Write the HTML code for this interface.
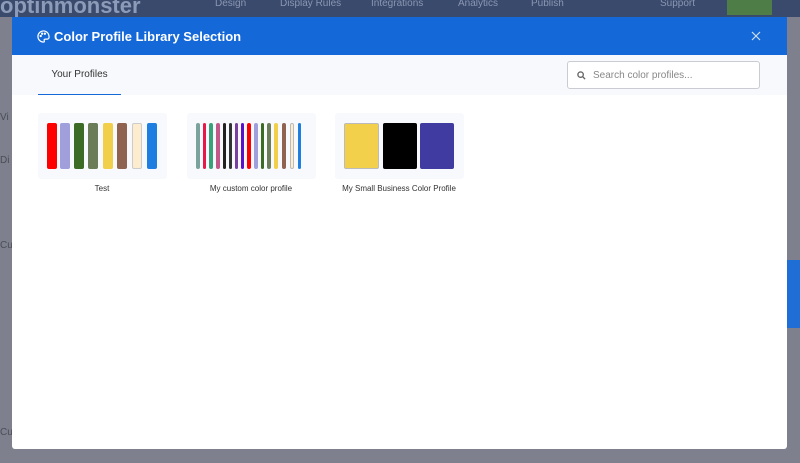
<!DOCTYPE html>
<html><head><style>
*{margin:0;padding:0;box-sizing:border-box}
body{width:800px;height:463px;overflow:hidden;background:#7e818d;font-family:"Liberation Sans",sans-serif;position:relative}
.top{position:absolute;left:0;top:0;width:800px;height:17px;background:#3a4a6c}
.top span{position:absolute;top:-2px;color:#8b97b3;font-size:10px}
.logo{position:absolute;left:0;top:-7px;color:#8c9bb8;font-weight:bold;font-size:22px}
.save{position:absolute;left:727px;top:0;width:45px;height:15px;background:#4f7d48}
.side{position:absolute;color:#4a4d58;font-size:10px;left:0}
.modal{position:absolute;left:12px;top:17px;width:775px;height:432px;background:#fff;border-radius:0 0 3px 3px}
.hd{height:38px;background:#1468d8;color:#fff;font-weight:bold;font-size:13px;padding:12px 0 0 42px;position:relative}
.tabs{height:40px;background:#f7f9fc;position:relative}
.tab{position:absolute;left:26px;top:0;width:83px;height:40px;border-bottom:1px solid #1468d8;font-size:10px;color:#333;text-align:center;padding-top:14px}
.search{position:absolute;left:555px;top:6px;width:193px;height:28px;border:1px solid #c9ccd2;border-radius:3px;background:#fff;font-size:10px;color:#888;padding:8px 0 0 25px}
.card{position:absolute;top:96px;width:129px;height:66px;background:#f7f9fc;border-radius:3px}
.bar{position:absolute;top:10px;height:46px;border-radius:2px}
.lbl{position:absolute;top:167px;font-size:8px;color:#333;text-align:center;width:150px}
.fb{position:absolute;left:787px;top:260px;width:13px;height:68px;background:#1f6ed6}
</style></head><body>
<div class="top"><div class="logo">optinmonster</div>
<span style="left:215px">Design</span><span style="left:280px">Display Rules</span><span style="left:371px">Integrations</span><span style="left:458px">Analytics</span><span style="left:531px">Publish</span><span style="left:660px">Support</span><div class="save"></div></div>
<div class="side" style="top:112px">Vi</div><div class="side" style="top:155px">Di</div><div class="side" style="top:240px">Cu</div><div class="side" style="top:427px">Cu</div>
<div class="fb"></div>
<div class="modal">
<div class="hd"><svg style="position:absolute;left:25px;top:13px" width="13" height="13" viewBox="0 0 14 14" fill="none" stroke="#fff" stroke-width="1.3"><path d="M7 1a6 6 0 1 0 0 12c1 0 1.2-.8.8-1.5-.5-.8 0-1.7 1-1.7H11a2 2 0 0 0 2-2C13 3.6 10.3 1 7 1z"/><circle cx="4" cy="6.5" r=".6"/><circle cx="5.5" cy="4" r=".6"/><circle cx="8.5" cy="4" r=".6"/></svg>Color Profile Library Selection<svg style="position:absolute;left:739px;top:14px" width="10" height="10" viewBox="0 0 10 10" stroke="#cfe0f7" stroke-width="1.2"><path d="M1 1 9 9M9 1 1 9"/></svg></div>
<div class="tabs"><div class="tab">Your Profiles</div><div class="search"><svg style="position:absolute;left:9px;top:9px" width="9" height="9" viewBox="0 0 10 10" fill="none" stroke="#666" stroke-width="1.5"><circle cx="4" cy="4" r="3"/><path d="M6.3 6.3 9 9"/></svg>Search color profiles...</div></div>
<div class="card" style="left:26px">
<div class="bar" style="left:9px;width:10px;background:#f00"></div>
<div class="bar" style="left:22px;width:10px;background:#a09fdc"></div>
<div class="bar" style="left:36px;width:10px;background:#3c6b26"></div>
<div class="bar" style="left:50px;width:10px;background:#6b7d58"></div>
<div class="bar" style="left:65px;width:10px;background:#f2cf4a"></div>
<div class="bar" style="left:79px;width:10px;background:#8f6350"></div>
<div class="bar" style="left:94px;width:10px;background:#fdeccd;border:1px solid #ccc"></div>
<div class="bar" style="left:109px;width:10px;background:#1e7fe0"></div>
</div>
<div class="lbl" style="left:15px">Test</div>
<div class="card" style="left:175px">
<div class="bar" style="left:9px;width:4px;background:#7aa39b"></div>
<div class="bar" style="left:16px;width:3px;background:#e6194b"></div>
<div class="bar" style="left:22px;width:4px;background:#3aa27a"></div>
<div class="bar" style="left:29px;width:4px;background:#c2578c"></div>
<div class="bar" style="left:36px;width:3px;background:#222"></div>
<div class="bar" style="left:42px;width:3px;background:#333"></div>
<div class="bar" style="left:48px;width:3px;background:#7a3fa0"></div>
<div class="bar" style="left:54px;width:3px;background:#5a12c8"></div>
<div class="bar" style="left:60px;width:4px;background:#f00"></div>
<div class="bar" style="left:67px;width:4px;background:#a09fdc"></div>
<div class="bar" style="left:74px;width:3px;background:#3c6b26"></div>
<div class="bar" style="left:80px;width:4px;background:#6b7d58"></div>
<div class="bar" style="left:87px;width:4px;background:#f2cf4a"></div>
<div class="bar" style="left:95px;width:4px;background:#8f6350"></div>
<div class="bar" style="left:103px;width:4px;background:#fdeccd;border:1px solid #bbb"></div>
<div class="bar" style="left:111px;width:3px;background:#1e7fe0"></div>
</div>
<div class="lbl" style="left:164px">My custom color profile</div>
<div class="card" style="left:323px">
<div class="bar" style="left:9px;width:35px;background:#f3d04c;border:1px solid #bbb"></div>
<div class="bar" style="left:48px;width:34px;background:#000"></div>
<div class="bar" style="left:85px;width:34px;background:#3f3ba0"></div>
</div>
<div class="lbl" style="left:312px">My Small Business Color Profile</div>
</div>
</body></html>
